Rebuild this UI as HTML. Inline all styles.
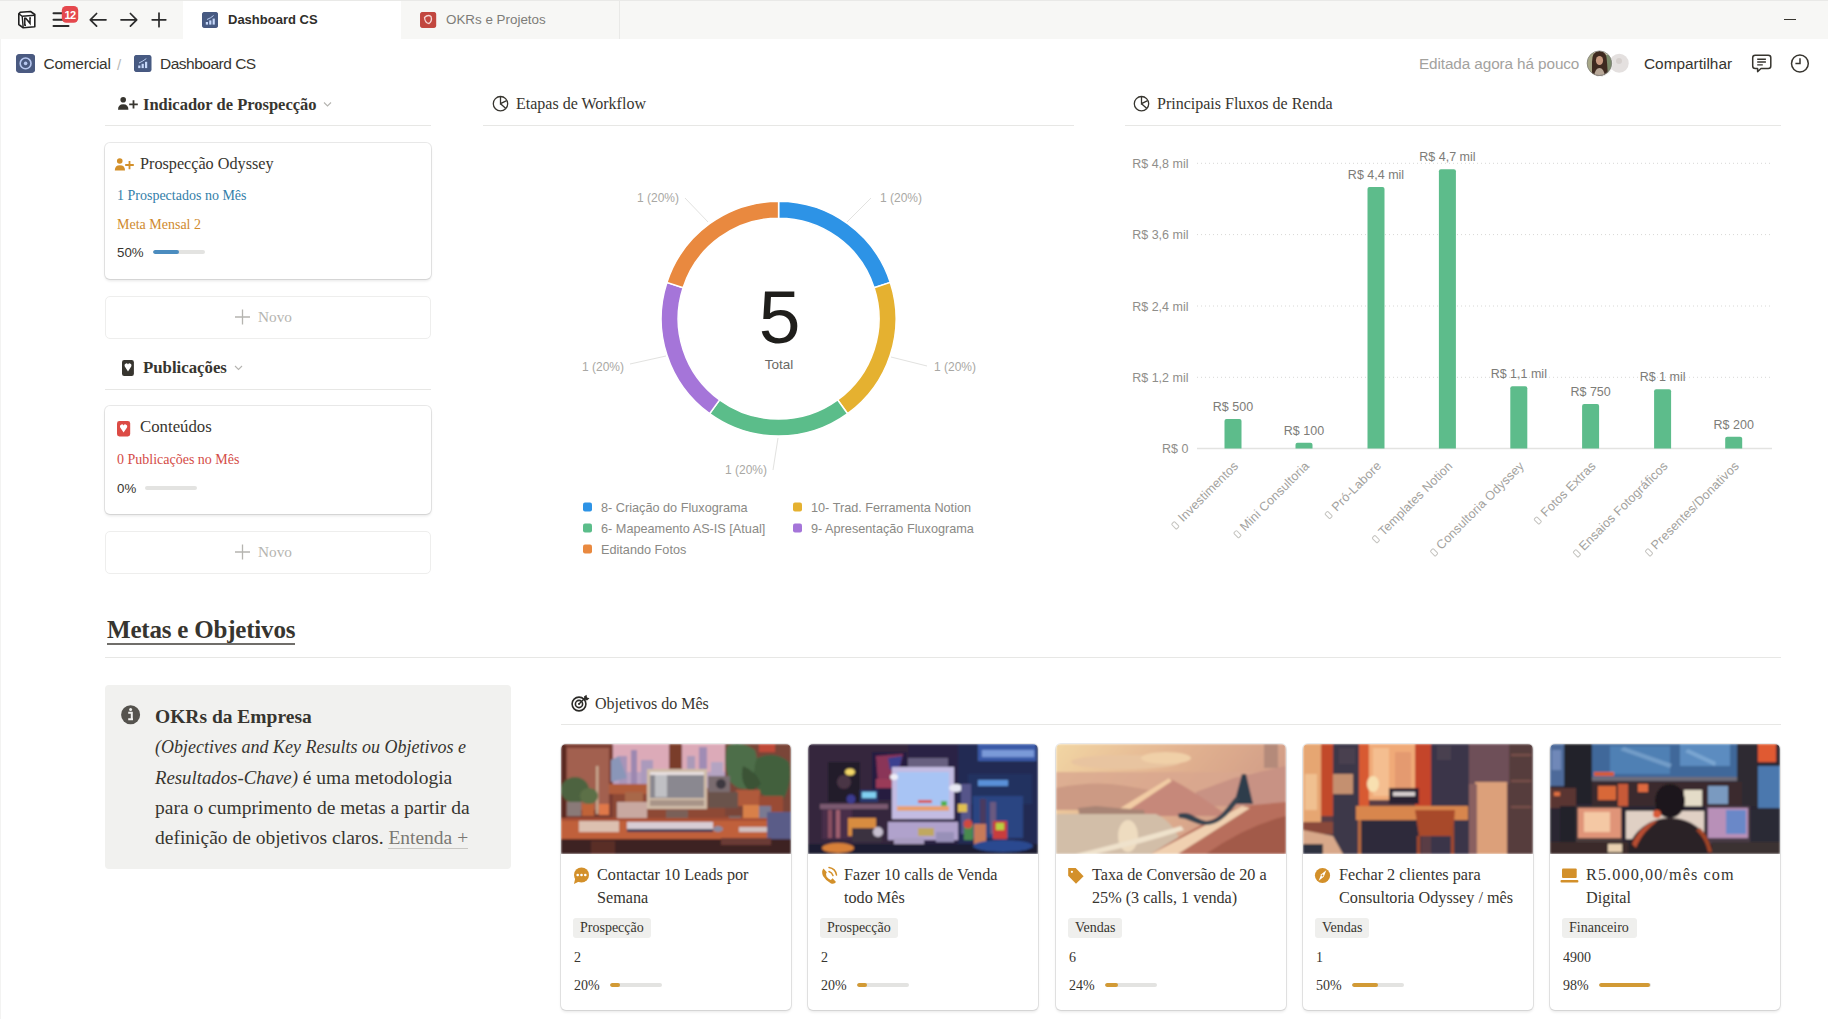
<!DOCTYPE html>
<html><head><meta charset="utf-8">
<style>
*{margin:0;padding:0;box-sizing:border-box}
html,body{width:1828px;height:1019px;overflow:hidden;background:#fff}
body{position:relative;font-family:"Liberation Sans",sans-serif;color:#37352f}
.a{position:absolute;white-space:nowrap;line-height:1}
.sf{font-family:"Liberation Serif",serif}
.ln{position:absolute;height:1px;background:#e7e7e5}
.card{position:absolute;border-radius:5px;background:#fff;box-shadow:0 0 0 1px rgba(15,15,15,.09),0 2px 3px rgba(15,15,15,.1)}
.novo{position:absolute;border-radius:5px;border:1px solid #eeeeed;background:#fff}
.bar{position:absolute;height:4px;border-radius:2px;background:#e3e3e1;overflow:hidden}
.bar i{position:absolute;left:0;top:0;bottom:0;border-radius:2px}
</style></head><body>

<!-- TAB BAR -->
<div class="a" style="left:0;top:0;width:1828px;height:39px;background:#f7f7f5;border-top:1px solid #e9e9e7"></div>
<div class="a" style="left:183px;top:1px;width:218px;height:38px;background:#fff"></div>
<div class="a" style="left:619px;top:1px;width:1px;height:38px;background:#e9e9e7"></div>
<div class="a" style="left:0;top:39px;width:1px;height:980px;background:#f3f3f2"></div>

<!-- TAB 1 -->
<div class="a" style="left:202px;top:12px;width:16px;height:16px;border-radius:3px;background:#45507a"></div>
<div class="a" style="left:228px;top:13px;font-size:13px;font-weight:700;color:#2f2e2a">Dashboard CS</div>
<!-- TAB 2 -->
<div class="a" style="left:420px;top:12px;width:16px;height:16px;border-radius:3px;background:#c9524f"></div>
<div class="a" style="left:446px;top:13px;font-size:13.4px;color:#7d7c78">OKRs e Projetos</div>

<!-- minimize -->
<div class="a" style="left:1784px;top:19px;width:12px;height:1px;background:#37352f"></div>

<!-- BREADCRUMB -->
<div class="a" style="left:16px;top:54px;width:19px;height:19px;border-radius:4px;background:#4e5a86"></div>
<div class="a" style="left:43.5px;top:56px;font-size:15.5px;letter-spacing:-0.3px;color:#37352f">Comercial</div>
<div class="a" style="left:117px;top:57px;font-size:15px;color:#b9b8b5">/</div>
<div class="a" style="left:134px;top:55px;width:17px;height:17px;border-radius:3px;background:#45507a"></div>
<div class="a" style="left:160px;top:56px;font-size:15.5px;letter-spacing:-0.5px;color:#37352f">Dashboard CS</div>

<div class="a" style="left:1419px;top:55.5px;font-size:15.3px;letter-spacing:-0.1px;color:#a3a29e">Editada agora há pouco</div>
<div class="a" style="left:1587px;top:51px;width:26px;height:26px;border-radius:50%;background:#6b5a4c;border:1px solid #fff"></div>
<div class="a" style="left:1644px;top:55.5px;font-size:15.4px;color:#37352f">Compartilhar</div>

<!-- LEFT COLUMN -->
<div class="a sf" style="left:143px;top:96.5px;font-size:16.5px;font-weight:700">Indicador de Prospecção</div>
<div class="ln" style="left:105px;top:125px;width:326px"></div>

<div class="card" style="left:105px;top:143px;width:326px;height:136px"></div>
<div class="a sf" style="left:140px;top:155.5px;font-size:16.2px">Prospecção Odyssey</div>
<div class="a sf" style="left:117px;top:189px;font-size:14px;color:#337ea9">1 Prospectados no Mês</div>
<div class="a sf" style="left:117px;top:217.5px;font-size:14px;color:#cf8a2e">Meta Mensal 2</div>
<div class="a" style="left:117px;top:245.5px;font-size:13.3px">50%</div>
<div class="bar" style="left:153px;top:250px;width:52px"><i style="width:26px;background:#4b8cbf"></i></div>

<div class="novo" style="left:105px;top:296px;width:326px;height:43px"></div>
<div class="a sf" style="left:258px;top:309px;font-size:15.3px;color:#b5b4b0">Novo</div>

<div class="a sf" style="left:143px;top:360px;font-size:16.8px;font-weight:700">Publicações</div>
<div class="ln" style="left:105px;top:389px;width:326px"></div>

<div class="card" style="left:105px;top:406px;width:326px;height:108px"></div>
<div class="a sf" style="left:140px;top:419px;font-size:16.8px">Conteúdos</div>
<div class="a sf" style="left:117px;top:453px;font-size:14px;color:#d44c47">0 Publicações no Mês</div>
<div class="a" style="left:117px;top:481.5px;font-size:13.3px">0%</div>
<div class="bar" style="left:145px;top:486px;width:52px"></div>

<div class="novo" style="left:105px;top:531px;width:326px;height:43px"></div>
<div class="a sf" style="left:258px;top:544px;font-size:15.3px;color:#b5b4b0">Novo</div>

<!-- MIDDLE -->
<div class="a sf" style="left:516px;top:96px;font-size:16px">Etapas de Workflow</div>
<div class="ln" style="left:483px;top:125px;width:591px"></div>

<!-- RIGHT -->
<div class="a sf" style="left:1157px;top:96px;font-size:16px">Principais Fluxos de Renda</div>
<div class="ln" style="left:1125px;top:125px;width:656px"></div>

<svg class="a" style="left:0;top:0" width="1828" height="1019" viewBox="0 0 1828 1019">
<style>text{font-family:"Liberation Sans",sans-serif}.pl{font-size:12px;fill:#a9a8a4}.lg{font-size:12.7px;fill:#8a8985}.yl{font-size:12.5px;fill:#8f8e8a}.vl{font-size:12.5px;fill:#7d7c78}.xl{font-size:12.5px;fill:#a3a29e;letter-spacing:0.15px}</style>
<path d="M778.6 201.3A117.4 117.4 0 0 1 890.3 282.4L874.1 287.7A100.4 100.4 0 0 0 778.6 218.3Z" fill="#2d93e6" stroke="#fff" stroke-width="1.5"/>
<path d="M890.3 282.4A117.4 117.4 0 0 1 847.6 413.7L837.6 399.9A100.4 100.4 0 0 0 874.1 287.7Z" fill="#e5b130" stroke="#fff" stroke-width="1.5"/>
<path d="M847.6 413.7A117.4 117.4 0 0 1 709.6 413.7L719.6 399.9A100.4 100.4 0 0 0 837.6 399.9Z" fill="#5bbd8a" stroke="#fff" stroke-width="1.5"/>
<path d="M709.6 413.7A117.4 117.4 0 0 1 666.9 282.4L683.1 287.7A100.4 100.4 0 0 0 719.6 399.9Z" fill="#a575d9" stroke="#fff" stroke-width="1.5"/>
<path d="M666.9 282.4A117.4 117.4 0 0 1 778.6 201.3L778.6 218.3A100.4 100.4 0 0 0 683.1 287.7Z" fill="#e9893f" stroke="#fff" stroke-width="1.5"/>
<g stroke="#e2e2e0" stroke-width="1" fill="none">
<path d="M847 222L871 198"/><path d="M891 357L927 366"/><path d="M778 438L773 470"/><path d="M666 356L630 364"/><path d="M708 222L685 198"/>
</g>
<text x="880" y="202" class="pl">1 (20%)</text>
<text x="934" y="371" class="pl">1 (20%)</text>
<text x="725" y="474" class="pl">1 (20%)</text>
<text x="582" y="371" class="pl">1 (20%)</text>
<text x="637" y="202" class="pl">1 (20%)</text>
<text x="779.5" y="342.7" text-anchor="middle" font-size="75" fill="#1f1e1b">5</text>
<text x="779" y="368.8" text-anchor="middle" font-size="13.5" fill="#6a6965">Total</text>
<rect x="583" y="502.5" width="9" height="9" rx="2" fill="#2d93e6"/><text x="601" y="511.5" class="lg">8- Criação do Fluxograma</text>
<rect x="793" y="502.5" width="9" height="9" rx="2" fill="#e5b130"/><text x="811" y="511.5" class="lg">10- Trad. Ferramenta Notion</text>
<rect x="583" y="523.5" width="9" height="9" rx="2" fill="#5bbd8a"/><text x="601" y="532.5" class="lg">6- Mapeamento AS-IS [Atual]</text>
<rect x="793" y="523.5" width="9" height="9" rx="2" fill="#a575d9"/><text x="811" y="532.5" class="lg">9- Apresentação Fluxograma</text>
<rect x="583" y="544.5" width="9" height="9" rx="2" fill="#e9893f"/><text x="601" y="553.5" class="lg">Editando Fotos</text>

<line x1="1197" y1="163.3" x2="1772" y2="163.3" stroke="#d8d8d6" stroke-width="1" stroke-dasharray="1 3"/>
<text x="1188.5" y="167.8" text-anchor="end" class="yl">R$ 4,8 mil</text>
<line x1="1197" y1="234.6" x2="1772" y2="234.6" stroke="#d8d8d6" stroke-width="1" stroke-dasharray="1 3"/>
<text x="1188.5" y="239.1" text-anchor="end" class="yl">R$ 3,6 mil</text>
<line x1="1197" y1="306" x2="1772" y2="306" stroke="#d8d8d6" stroke-width="1" stroke-dasharray="1 3"/>
<text x="1188.5" y="310.5" text-anchor="end" class="yl">R$ 2,4 mil</text>
<line x1="1197" y1="377.3" x2="1772" y2="377.3" stroke="#d8d8d6" stroke-width="1" stroke-dasharray="1 3"/>
<text x="1188.5" y="381.8" text-anchor="end" class="yl">R$ 1,2 mil</text>
<text x="1188.5" y="453.1" text-anchor="end" class="yl">R$ 0</text>
<line x1="1197" y1="448.6" x2="1772" y2="448.6" stroke="#e3e3e1" stroke-width="1.5"/>
<path d="M1224.5 448.6V420.9Q1224.5 418.9 1226.5 418.9H1239.5Q1241.5 418.9 1241.5 420.9V448.6Z" fill="#5dbc8b"/>
<text x="1233.0" y="410.9" text-anchor="middle" class="vl">R$ 500</text>
<g transform="rotate(-45 1239.0 466.6)"><text x="1239.0" y="466.6" text-anchor="end" class="xl">Investimentos</text><rect x="1150.4" y="459.6" width="4" height="7" rx="1" fill="none" stroke="#c4c3bf" stroke-width="1"/></g>
<path d="M1295.5 448.6V444.7Q1295.5 442.7 1297.5 442.7H1310.5Q1312.5 442.7 1312.5 444.7V448.6Z" fill="#5dbc8b"/>
<text x="1304.0" y="434.7" text-anchor="middle" class="vl">R$ 100</text>
<g transform="rotate(-45 1310.0 466.6)"><text x="1310.0" y="466.6" text-anchor="end" class="xl">Mini Consultoria</text><rect x="1208.9" y="459.6" width="4" height="7" rx="1" fill="none" stroke="#c4c3bf" stroke-width="1"/></g>
<path d="M1367.5 448.6V189.1Q1367.5 187.1 1369.5 187.1H1382.5Q1384.5 187.1 1384.5 189.1V448.6Z" fill="#5dbc8b"/>
<text x="1376.0" y="179.1" text-anchor="middle" class="vl">R$ 4,4 mil</text>
<g transform="rotate(-45 1382.0 466.6)"><text x="1382.0" y="466.6" text-anchor="end" class="xl">Pró-Labore</text><rect x="1308.0" y="459.6" width="4" height="7" rx="1" fill="none" stroke="#c4c3bf" stroke-width="1"/></g>
<path d="M1438.9 448.6V171.2Q1438.9 169.2 1440.9 169.2H1453.9Q1455.9 169.2 1455.9 171.2V448.6Z" fill="#5dbc8b"/>
<text x="1447.4" y="161.2" text-anchor="middle" class="vl">R$ 4,7 mil</text>
<g transform="rotate(-45 1453.4 466.6)"><text x="1453.4" y="466.6" text-anchor="end" class="xl">Templates Notion</text><rect x="1345.3" y="459.6" width="4" height="7" rx="1" fill="none" stroke="#c4c3bf" stroke-width="1"/></g>
<path d="M1510.3 448.6V388.2Q1510.3 386.2 1512.3 386.2H1525.3Q1527.3 386.2 1527.3 388.2V448.6Z" fill="#5dbc8b"/>
<text x="1518.8" y="378.2" text-anchor="middle" class="vl">R$ 1,1 mil</text>
<g transform="rotate(-45 1524.8 466.6)"><text x="1524.8" y="466.6" text-anchor="end" class="xl">Consultoria Odyssey</text><rect x="1398.0" y="459.6" width="4" height="7" rx="1" fill="none" stroke="#c4c3bf" stroke-width="1"/></g>
<path d="M1582.1 448.6V406.0Q1582.1 404.0 1584.1 404.0H1597.1Q1599.1 404.0 1599.1 406.0V448.6Z" fill="#5dbc8b"/>
<text x="1590.6" y="396.0" text-anchor="middle" class="vl">R$ 750</text>
<g transform="rotate(-45 1596.6 466.6)"><text x="1596.6" y="466.6" text-anchor="end" class="xl">Fotos Extras</text><rect x="1514.9" y="459.6" width="4" height="7" rx="1" fill="none" stroke="#c4c3bf" stroke-width="1"/></g>
<path d="M1654.1 448.6V391.2Q1654.1 389.2 1656.1 389.2H1669.1Q1671.1 389.2 1671.1 391.2V448.6Z" fill="#5dbc8b"/>
<text x="1662.6" y="381.2" text-anchor="middle" class="vl">R$ 1 mil</text>
<g transform="rotate(-45 1668.6 466.6)"><text x="1668.6" y="466.6" text-anchor="end" class="xl">Ensaios Fotográficos</text><rect x="1540.4" y="459.6" width="4" height="7" rx="1" fill="none" stroke="#c4c3bf" stroke-width="1"/></g>
<path d="M1725.2 448.6V438.7Q1725.2 436.7 1727.2 436.7H1740.2Q1742.2 436.7 1742.2 438.7V448.6Z" fill="#5dbc8b"/>
<text x="1733.7" y="428.7" text-anchor="middle" class="vl">R$ 200</text>
<g transform="rotate(-45 1739.7 466.6)"><text x="1739.7" y="466.6" text-anchor="end" class="xl">Presentes/Donativos</text><rect x="1612.9" y="459.6" width="4" height="7" rx="1" fill="none" stroke="#c4c3bf" stroke-width="1"/></g>
</svg>

<svg class="a" style="left:0;top:0;z-index:5" width="1828" height="1019" viewBox="0 0 1828 1019">
<!-- notion logo -->
<g transform="translate(18,11)">
<path d="M2.5 1.2 L12.5 0.5 L16.8 3.5 L16.8 15.8 L5.2 16.8 L0.8 13.5 L0.8 2.8Z" fill="#fff" stroke="#1f1f1f" stroke-width="1.6" stroke-linejoin="round"/>
<path d="M0.8 2.8 L4.2 5.2 L16.8 4.2 M4.2 5.2 L5.2 16.8" fill="none" stroke="#1f1f1f" stroke-width="1.4"/>
<path d="M6.8 14 V7.3 L7.8 7.2 L12 12.3 V7 M6.2 14.2 H8 M11.2 6.9 H13 M6 7.4 H8" fill="none" stroke="#1f1f1f" stroke-width="1.5"/>
</g>
<!-- hamburger -->
<g stroke="#2b2b2b" stroke-width="2" stroke-linecap="round"><path d="M53.5 13.2H64M53.5 19.7H64M53.5 25.9H68.5"/></g>
<rect x="61.8" y="6" width="16.4" height="16.8" rx="4.5" fill="#e5484d"/>
<text x="70" y="18.6" text-anchor="middle" font-family="Liberation Sans" font-size="11" font-weight="700" fill="#fff" letter-spacing="-0.5">12</text>
<!-- arrows -->
<g fill="none" stroke="#2b2b2b" stroke-width="1.7" stroke-linecap="round" stroke-linejoin="round">
<path d="M106 19.8H90.5M96.6 13.5L90.3 19.8L96.6 26.2"/>
<path d="M121 19.8H136.5M130.4 13.5L136.7 19.8L130.4 26.2"/>
<path d="M159 13V26.7M152.2 19.8H165.8"/>
</g>
<!-- tab icons -->
<rect x="202.2" y="12.1" width="15.8" height="15.6" rx="2.5" fill="#475a82"/>
<g fill="#c6d8fa"><rect x="205.8" y="22" width="2.2" height="2.6"/><rect x="209.2" y="20.4" width="2.2" height="4.2"/><rect x="212.6" y="18.6" width="2.2" height="6"/></g>
<path d="M207 19.5L210.5 17.8L213.6 15.5" stroke="#c6d8fa" stroke-width="0.9" fill="none"/>
<rect x="420.3" y="11.9" width="15.9" height="15.9" rx="2.5" fill="#c2473f"/>
<path d="M424.5 17.5 Q428 14 431 16.5 Q432.5 21 429 23.5 Q425 23 424.5 17.5Z" fill="none" stroke="#f6d6d4" stroke-width="1.3"/>
<!-- breadcrumb icons -->
<rect x="16.2" y="54.2" width="18.8" height="18.4" rx="3" fill="#4a5a80"/>
<circle cx="25.6" cy="63.4" r="5.4" fill="none" stroke="#b8c8f0" stroke-width="1.6"/>
<circle cx="25.6" cy="63.4" r="1.8" fill="#b8c8f0"/>
<rect x="134.3" y="55" width="17.2" height="16.8" rx="2.6" fill="#475a82"/>
<g fill="#c6d8fa"><rect x="138.2" y="65.5" width="2.2" height="2.6"/><rect x="141.6" y="63.8" width="2.2" height="4.3"/><rect x="145" y="61.8" width="2.2" height="6.3"/></g>
<path d="M139 63L142.8 61L146.3 58.6" stroke="#c6d8fa" stroke-width="0.9" fill="none"/>
<!-- avatars -->
<circle cx="1619.2" cy="63.2" r="9.5" fill="#e4e0df"/>
<circle cx="1619" cy="61" r="3" fill="#d6d0ce"/>
<circle cx="1599.4" cy="63.2" r="13" fill="#fff"/>
<clipPath id="avc"><circle cx="1599.4" cy="63.2" r="12.3"/></clipPath>
<g clip-path="url(#avc)">
<rect x="1587" y="50" width="26" height="27" fill="#c9c4a8"/>
<rect x="1587" y="50" width="7" height="27" fill="#a8a888"/>
<rect x="1606" y="55" width="8" height="22" fill="#7a8a6a"/>
<path d="M1592 77 L1592 62 Q1592 51 1599.5 51 Q1607 51 1607 62 L1608 77Z" fill="#3e2a20"/>
<ellipse cx="1599.5" cy="60.5" rx="3.6" ry="4.6" fill="#c89a80"/>
<path d="M1594 77 Q1595 68 1599.5 68 Q1604 68 1605 77Z" fill="#b8a898"/>
</g>
<circle cx="1599.4" cy="63.2" r="12.3" fill="none" stroke="#7a7a78" stroke-width="0.7"/>
<!-- comment -->
<path d="M1755.2 55.3H1768.3Q1770.8 55.3 1770.8 57.8V66Q1770.8 68.5 1768.3 68.5H1761L1757.6 71.6V68.5H1755.2Q1752.7 68.5 1752.7 66V57.8Q1752.7 55.3 1755.2 55.3Z" fill="none" stroke="#37352f" stroke-width="1.5" stroke-linejoin="round"/>
<path d="M1757.2 59.2H1765.9M1757.2 62H1765.9M1757.2 64.9H1762.8" stroke="#37352f" stroke-width="1.4"/>
<!-- clock -->
<circle cx="1799.9" cy="63.5" r="8.4" fill="none" stroke="#37352f" stroke-width="1.5"/>
<path d="M1800 58.3V63.6H1795.4" fill="none" stroke="#37352f" stroke-width="1.5"/>
<!-- section icons -->
<g fill="#37352f">
<circle cx="123.2" cy="99.8" r="2.8"/>
<path d="M118 109.7 Q118 104.2 123.2 104.2 Q128.4 104.2 128.4 109.7Z"/>
</g>
<path d="M133.5 100.2V108.4M129.2 104.3H137.8" stroke="#37352f" stroke-width="1.8"/>
<path d="M324 102.5L327.5 106L331 102.5" fill="none" stroke="#b5b4b0" stroke-width="1.1"/>
<rect x="122" y="360" width="11.9" height="15.9" rx="2.2" fill="#37352f"/>
<path d="M128 371.5 L124.8 366.5 Q124 364 126 363.4 Q127.5 363.2 128 364.5 Q128.5 363.2 130 363.4 Q132 364 131.2 366.5Z" fill="#fff"/>
<path d="M235 366L238.5 369.5L242 366" fill="none" stroke="#b5b4b0" stroke-width="1.1"/>
<g fill="#d3902a">
<circle cx="119.75" cy="161" r="2.8"/>
<path d="M114.8 170.5 Q114.8 165.2 119.9 165.2 Q125 165.2 125 170.5Z"/>
</g>
<path d="M129.5 160.9V169.2M125.2 165H133.8" stroke="#d3902a" stroke-width="1.8"/>
<rect x="117" y="421" width="13.2" height="15.4" rx="2.4" fill="#dc4b45"/>
<path d="M123.6 432.5 L120.2 427.6 Q119.4 425 121.6 424.4 Q123 424.2 123.6 425.5 Q124.2 424.2 125.6 424.4 Q127.8 425 127 427.6Z" fill="#fff"/>
<!-- pie icons -->
<g fill="none" stroke="#37352f" stroke-width="1.3">
<circle cx="500.5" cy="103.7" r="7.2"/><path d="M500.5 96.5V103.7L506.6 100.6M500.5 103.7L505.6 108.3"/>
<circle cx="1141.5" cy="103.7" r="7.2"/><path d="M1141.5 96.5V103.7L1147.6 100.6M1141.5 103.7L1146.6 108.3"/>
</g>
<!-- target icon -->
<g fill="none" stroke="#2b2a27" stroke-width="1.6">
<circle cx="579" cy="704" r="6.9"/><circle cx="579" cy="704" r="3.6"/>
</g>
<circle cx="579" cy="704" r="1" fill="#2b2a27"/>
<path d="M579 704L585 698" stroke="#2b2a27" stroke-width="1.5"/>
<path d="M584 696.5L586.5 694.8L587 697.5L589.5 698.2L587 700.5L584.5 699.5Z" fill="#2b2a27"/>
<!-- info icon -->
<circle cx="130.6" cy="714.8" r="9.5" fill="#55534e"/>
<circle cx="130.6" cy="709.6" r="1.5" fill="#f1f1ef"/>
<path d="M128.2 712.8H131.8V719.2H133M128.2 719.2H133" fill="none" stroke="#f1f1ef" stroke-width="2"/>
<!-- novo plus -->
<path d="M242.5 309.5V324.5M235 317H250" stroke="#b5b4b0" stroke-width="1.3"/>
<path d="M242.5 544.5V559.5M235 552H250" stroke="#b5b4b0" stroke-width="1.3"/>
<!-- card icons -->
<g fill="#d3902a">
<circle cx="581.5" cy="874.9" r="7.5"/><path d="M574 884 L575.5 877 L580 881Z"/>
<path d="M823.5 868.5 Q821 871 823 876 Q826 881 831 883.5 Q834.5 884.5 836 882 L832.6 878.3 L830.8 880 Q828 878.5 826.5 876.5 Q825 874.5 826.8 872.3Z"/>
<path d="M1068.2 868H1075.7L1083.6 876.3L1076 883.7L1068.2 875.7Z"/>
<circle cx="1322.5" cy="875.5" r="7.6"/>
<rect x="1562" y="868.6" width="14.7" height="9.3" rx="1"/>
<rect x="1560.5" y="879.9" width="17.9" height="2.6" rx="1"/>
</g>
<g fill="#fff"><circle cx="577.7" cy="875" r="1.3"/><circle cx="581.5" cy="875" r="1.3"/><circle cx="585.3" cy="875" r="1.3"/>
<circle cx="1071.9" cy="871.8" r="1.1"/>
<path d="M1326.3 870.3 L1323.8 876.8 L1318.7 880.7 L1321.2 874.2Z"/>
</g>
<circle cx="1322.5" cy="875.5" r="0.9" fill="#d3902a"/>
<g fill="none" stroke="#d3902a" stroke-width="1.5" stroke-linecap="round">
<path d="M829 871.5 Q832 872.5 833 875.5"/><path d="M829 867.5 Q835.5 868.5 836.5 875"/>
</g>
</svg>

<!-- METAS -->
<div class="a sf" style="left:107px;top:616.5px;font-size:25px;font-weight:700;letter-spacing:-0.2px">Metas e Objetivos</div>
<div class="ln" style="left:105px;top:657px;width:1676px"></div>

<div class="a" style="left:105px;top:685px;width:406px;height:184px;background:#f1f1ef;border-radius:4px"></div>

<div class="a sf" style="left:595px;top:696px;font-size:16px">Objetivos do Mês</div>
<div class="ln" style="left:561px;top:724px;width:1220px"></div>

<div class="a" style="left:107px;top:643px;width:188px;height:2px;background:#706e6a"></div>
<div class="a sf" style="left:155px;top:702px;font-size:19.5px;line-height:30.3px;white-space:normal;width:340px;color:#37352f">
<b style="font-size:19.5px">OKRs da Empresa</b><br><i style="font-size:18px">(Objectives and Key Results ou Objetivos e</i><br><i style="font-size:18.8px">Resultados-Chave)</i> é uma metodologia<br>para o cumprimento de metas a partir da<br>definição de objetivos claros. <span style="color:#7a7873;border-bottom:1px solid #c9c8c4">Entenda +</span></div>
<div class="card" style="left:561px;top:744px;width:230px;height:266px;overflow:hidden"><svg style="position:absolute;left:0;top:0" width="230" height="110" viewBox="0 0 230 110"><filter id="bl0" x="-5%" y="-5%" width="110%" height="110%"><feGaussianBlur stdDeviation="1.2"/></filter><g filter="url(#bl0)"><rect width="230" height="110" fill="#8e4a36"/>
<rect x="0" y="0" width="52" height="78" fill="#7a3e30"/>
<rect x="6" y="4" width="42" height="62" fill="#a26050"/>
<rect x="0" y="0" width="5" height="110" fill="#5a2a22"/>
<rect x="52" y="0" width="112" height="44" fill="#dcaab8"/>
<rect x="52" y="28" width="112" height="16" fill="#b8a0c0"/>
<rect x="58" y="12" width="8" height="32" fill="#a894b8"/>
<rect x="70" y="6" width="6" height="38" fill="#9c88b0"/>
<rect x="80" y="16" width="12" height="28" fill="#ab9abc"/>
<rect x="126" y="12" width="8" height="32" fill="#ab9ab8"/>
<rect x="138" y="3" width="8" height="41" fill="#a08cb4"/>
<rect x="150" y="18" width="12" height="26" fill="#b4a4c2"/>
<rect x="108" y="0" width="13" height="26" fill="#7a3c2a"/>
<rect x="48" y="40" width="40" height="10" fill="#b05c3a"/>
<rect x="164" y="0" width="66" height="72" fill="#7a4438"/>
<rect x="198" y="0" width="16" height="8" fill="#c04838"/>
<path d="M166 2 Q180 -4 194 6 Q200 22 190 44 Q176 48 168 36 Q162 18 166 2Z" fill="#4e6e4a"/>
<path d="M196 14 Q214 6 228 18 Q232 40 222 56 Q204 58 196 44 Q190 28 196 14Z" fill="#43603e"/>
<path d="M182 22 Q196 28 200 40 L190 48 Q178 40 182 22Z" fill="#3a5236"/>
<rect x="175" y="46" width="24" height="16" fill="#b05a3a"/>
<rect x="198" y="52" width="24" height="18" fill="#9a4c34"/>
<path d="M50 16 L58 12 L66 34 L50 38Z" fill="#8a96b8"/>
<rect x="35" y="22" width="2.5" height="48" fill="#c8a890"/>
<ellipse cx="14" cy="46" rx="14" ry="13" fill="#4e6440"/>
<ellipse cx="28" cy="52" rx="9" ry="8" fill="#5c7046"/>
<rect x="6" y="58" width="14" height="14" fill="#8a7a78"/>
<rect x="21" y="60" width="12" height="12" fill="#c06438"/>
<rect x="38" y="60" width="10" height="11" fill="#e07848"/>
<rect x="56" y="58" width="30" height="16" fill="#c8a8a0"/>
<rect x="64" y="48" width="18" height="10" fill="#a86848"/>
<rect x="86" y="25" width="60" height="40" fill="#d0bca8"/>
<rect x="89" y="28" width="54" height="26" fill="#8a8890"/>
<rect x="94" y="31" width="12" height="22" fill="#c0c0c4"/>
<rect x="89" y="28" width="54" height="3" fill="#e8e0e0"/>
<rect x="89" y="56" width="54" height="6" fill="#a89488"/>
<rect x="105" y="66" width="22" height="8" fill="#7a6058"/>
<rect x="147" y="32" width="22" height="16" fill="#7a6c70"/>
<circle cx="160" cy="40" r="5" fill="#3e3840"/>
<rect x="147" y="48" width="30" height="16" fill="#6a524c"/>
<rect x="182" y="61" width="16" height="14" fill="#d8804a"/>
<rect x="198" y="62" width="12" height="20" fill="#7a7a92"/>
<rect x="168" y="72" width="12" height="12" fill="#7a6a68"/>
<rect x="0" y="76" width="230" height="19" fill="#c0603a"/>
<rect x="0" y="74" width="230" height="3" fill="#a85034"/>
<rect x="66" y="78" width="86" height="9" fill="#d8ccd4"/>
<rect x="66" y="85" width="86" height="3" fill="#3a3a54"/>
<rect x="18" y="77" width="40" height="11" fill="#dcc0b0"/>
<ellipse cx="157" cy="85" rx="5" ry="3" fill="#8a8aa0"/>
<rect x="178" y="83" width="36" height="5" fill="#d0c0c0"/>
<rect x="206" y="68" width="24" height="34" fill="#5a5c88"/>
<rect x="0" y="95" width="230" height="15" fill="#3e2220"/>
<rect x="30" y="97" width="24" height="13" fill="#5a2e28"/>
<rect x="160" y="94" width="50" height="7" fill="#6a3a34"/>
</g></svg></div>
<div class="a sf" style="left:597px;top:864px;font-size:16.2px;line-height:22.5px;color:#37352f">Contactar 10 Leads por<br>Semana</div>
<div class="a" style="left:573px;top:918px;width:78px;height:20px;border-radius:3px;background:#efefed"></div>
<div class="a sf" style="left:580px;top:921px;font-size:14px;color:#37352f">Prospecção</div>
<div class="a sf" style="left:574px;top:951px;font-size:14px;color:#37352f">2</div>
<div class="a sf" style="left:574px;top:979px;font-size:14px;color:#37352f">20%</div>
<div class="bar" style="left:610px;top:983px;width:52px"><i style="width:10.4px;background:#d29a35"></i></div>
<div class="card" style="left:808px;top:744px;width:230px;height:266px;overflow:hidden"><svg style="position:absolute;left:0;top:0" width="230" height="110" viewBox="0 0 230 110"><filter id="bl1" x="-5%" y="-5%" width="110%" height="110%"><feGaussianBlur stdDeviation="1.2"/></filter><g filter="url(#bl1)"><rect width="230" height="110" fill="#2c2444"/>
<rect x="0" y="0" width="100" height="110" fill="#34283e"/>
<rect x="150" y="0" width="80" height="110" fill="#222a52"/>
<rect x="20" y="18" width="32" height="40" fill="#241c2c"/>
<ellipse cx="42" cy="28" rx="5" ry="3.5" fill="#f4d868"/>
<ellipse cx="36" cy="38" rx="7" ry="7" fill="#4a3444"/>
<rect x="64" y="8" width="35" height="48" fill="#281c40"/>
<path d="M68 12 L95 10 L90 30 L70 40Z" fill="#8a3458"/><path d="M80 14 L94 12 L92 22 L82 26Z" fill="#3a4090"/>
<rect x="68" y="35" width="16" height="9" fill="#9a3a58"/>
<rect x="100" y="14" width="40" height="10" fill="#686080"/>
<rect x="84" y="23" width="62" height="52" fill="#c4bce2"/>
<rect x="89" y="28" width="52" height="40" fill="#a8c4f4"/>
<rect x="89" y="62" width="52" height="5" fill="#e8a070"/>
<rect x="110" y="56" width="14" height="3" fill="#d85040"/>
<rect x="133" y="57" width="6" height="5" fill="#50b050"/>
<ellipse cx="86" cy="33" rx="4" ry="3" fill="#f0f0f8"/>
<ellipse cx="148" cy="44" rx="7" ry="4" fill="#e8e8f4"/>
<rect x="170" y="0" width="58" height="17" fill="#3a5aa8"/>
<rect x="174" y="6" width="52" height="7" fill="#7a9ad8"/>
<rect x="160" y="30" width="64" height="30" fill="#243060"/>
<rect x="170" y="36" width="30" height="6" fill="#5a90d8"/>
<rect x="165" y="52" width="50" height="42" fill="#2a4482"/>
<rect x="172" y="55" width="6" height="36" fill="#4a3a60"/>
<rect x="182" y="58" width="6" height="32" fill="#6a5a80"/>
<rect x="153" y="40" width="10" height="50" fill="#56548a"/>
<rect x="12" y="60" width="68" height="5" fill="#7a5a70"/>
<rect x="14" y="65" width="30" height="30" fill="#4a2e48"/>
<rect x="20" y="66" width="4" height="28" fill="#8a5060"/>
<rect x="28" y="66" width="4" height="28" fill="#a06070"/>
<rect x="40" y="74" width="28" height="18" fill="#d88c40"/>
<rect x="52" y="46" width="18" height="12" fill="#2a3a70"/>
<rect x="54" y="48" width="14" height="6" fill="#80d0f0"/>
<circle cx="43" cy="55" r="4.5" fill="#3a3a90"/>
<rect x="80" y="78" width="70" height="18" fill="#b0a2cc"/>
<rect x="110" y="84" width="16" height="8" fill="#c0a860"/>
<rect x="86" y="94" width="30" height="7" fill="#a89cc0"/>
<rect x="128" y="88" width="18" height="10" fill="#9890b8"/>
<rect x="44" y="84" width="30" height="14" fill="#3a3040"/>
<circle cx="70" cy="88" r="5" fill="#c8c0d0"/>
<rect x="156" y="80" width="9" height="16" fill="#4a8a50"/>
<circle cx="160" cy="80" r="4.5" fill="#d04a40"/>
<rect x="166" y="80" width="12" height="20" fill="#c87a58"/>
<rect x="185" y="77" width="14" height="18" fill="#c83c3c"/>
<rect x="188" y="79" width="8" height="7" fill="#b8d040"/>
<rect x="150" y="60" width="9" height="8" fill="#e0c050"/>
<rect x="0" y="100" width="230" height="10" fill="#1e1a30"/>
<ellipse cx="30" cy="104" rx="16" ry="5" fill="#d88038"/>
<ellipse cx="195" cy="102" rx="30" ry="6" fill="#2a4a90"/>
</g></svg></div>
<div class="a sf" style="left:844px;top:864px;font-size:16.2px;line-height:22.5px;color:#37352f">Fazer 10 calls de Venda<br>todo Mês</div>
<div class="a" style="left:820px;top:918px;width:78px;height:20px;border-radius:3px;background:#efefed"></div>
<div class="a sf" style="left:827px;top:921px;font-size:14px;color:#37352f">Prospecção</div>
<div class="a sf" style="left:821px;top:951px;font-size:14px;color:#37352f">2</div>
<div class="a sf" style="left:821px;top:979px;font-size:14px;color:#37352f">20%</div>
<div class="bar" style="left:857px;top:983px;width:52px"><i style="width:10.4px;background:#d29a35"></i></div>
<div class="card" style="left:1056px;top:744px;width:230px;height:266px;overflow:hidden"><svg style="position:absolute;left:0;top:0" width="230" height="110" viewBox="0 0 230 110"><filter id="bl2" x="-5%" y="-5%" width="110%" height="110%"><feGaussianBlur stdDeviation="1.2"/></filter><g filter="url(#bl2)"><defs><linearGradient id="sky2" x1="0" y1="0" x2="1" y2="0.4"><stop offset="0" stop-color="#f2d6a4"/><stop offset="0.5" stop-color="#e2b290"/><stop offset="1" stop-color="#cf9a86"/></linearGradient></defs>
<rect width="230" height="110" fill="url(#sky2)"/>
<ellipse cx="70" cy="18" rx="55" ry="7" fill="#e8c4a0"/>
<ellipse cx="110" cy="14" rx="25" ry="6" fill="#f0d0a8"/>
<rect x="0" y="28" width="230" height="30" fill="#d8a68e" opacity="0.8"/>
<path d="M0 44 Q40 36 70 42 Q95 46 110 50 L110 66 L0 66Z" fill="#cc9a84"/>
<path d="M140 48 L178 34 L230 22 L230 62 L140 62Z" fill="#c89284"/>
<rect x="208" y="0" width="14" height="24" fill="#b48a7a"/>
<path d="M58 68 L113 34 Q140 48 172 72 L58 72Z" fill="#c6887a"/>
<path d="M113 34 L58 68 L70 68 L116 37Z" fill="#f2cca4"/>
<path d="M22 64 L40 62 L60 64 L88 66 L90 76 L24 76Z" fill="#a88474"/>
<path d="M0 70 L100 70 Q122 80 128 110 L0 110Z" fill="#d2bea8"/>
<ellipse cx="72" cy="92" rx="10" ry="16" fill="#eedcc0"/>
<path d="M20 110 Q80 95 125 82 L128 86 Q85 100 40 110Z" fill="#efe2cc"/>
<path d="M95 110 Q150 76 186 62 L230 58 L230 110Z" fill="#b86e5c"/>
<path d="M95 110 L186 62 L194 64 L122 110Z" fill="#f0d0b0"/>
<path d="M150 110 Q190 82 230 72 L230 110Z" fill="#a25a4a"/>
<path d="M186 30 L190 30 L197 60 L178 60Z" fill="#2e3c4c"/>
<path d="M122 70 C135 66 140 76 150 77 C165 77 172 60 181 52 L184 55 C176 66 165 81 150 81 C140 81 132 74 123 74Z" fill="#34424f"/>
</g></svg></div>
<div class="a sf" style="left:1092px;top:864px;font-size:16.2px;line-height:22.5px;color:#37352f">Taxa de Conversão de 20 a<br>25% (3 calls, 1 venda)</div>
<div class="a" style="left:1068px;top:918px;width:54px;height:20px;border-radius:3px;background:#efefed"></div>
<div class="a sf" style="left:1075px;top:921px;font-size:14px;color:#37352f">Vendas</div>
<div class="a sf" style="left:1069px;top:951px;font-size:14px;color:#37352f">6</div>
<div class="a sf" style="left:1069px;top:979px;font-size:14px;color:#37352f">24%</div>
<div class="bar" style="left:1105px;top:983px;width:52px"><i style="width:12.5px;background:#d29a35"></i></div>
<div class="card" style="left:1303px;top:744px;width:230px;height:266px;overflow:hidden"><svg style="position:absolute;left:0;top:0" width="230" height="110" viewBox="0 0 230 110"><filter id="bl3" x="-5%" y="-5%" width="110%" height="110%"><feGaussianBlur stdDeviation="1.2"/></filter><g filter="url(#bl3)"><rect width="230" height="110" fill="#5a3e44"/>
<rect x="0" y="0" width="18" height="80" fill="#e6a672"/>
<rect x="2" y="30" width="12" height="36" fill="#f0c090"/>
<rect x="18" y="0" width="12" height="72" fill="#c24a2c"/>
<rect x="30" y="0" width="26" height="110" fill="#3e3848"/>
<rect x="36" y="4" width="16" height="16" fill="#4a4050"/>
<rect x="30" y="30" width="20" height="20" fill="#c49070"/>
<rect x="56" y="0" width="10" height="70" fill="#d85a30"/>
<rect x="66" y="0" width="46" height="56" fill="#f0aa78"/>
<rect x="70" y="4" width="16" height="48" fill="#f4be90"/>
<rect x="92" y="8" width="16" height="42" fill="#e49a70"/>
<rect x="112" y="0" width="16" height="64" fill="#c4442c"/>
<rect x="128" y="0" width="38" height="110" fill="#3a3448"/>
<rect x="134" y="2" width="14" height="14" fill="#4a4050"/>
<rect x="166" y="0" width="40" height="40" fill="#6e5058"/>
<rect x="172" y="38" width="32" height="72" fill="#dca07a"/>
<rect x="166" y="40" width="8" height="70" fill="#8a6060"/>
<rect x="206" y="0" width="24" height="110" fill="#563c3c"/>
<rect x="208" y="10" width="20" height="2" fill="#7a5048"/>
<rect x="208" y="36" width="20" height="2" fill="#7a5048"/>
<rect x="208" y="62" width="20" height="2" fill="#7a5048"/>
<ellipse cx="70" cy="40" rx="6" ry="8" fill="#f8e0b0"/>
<rect x="86" y="44" width="30" height="16" fill="#2a2230"/>
<rect x="90" y="48" width="22" height="4" fill="#d8d0d0"/>
<rect x="53" y="62" width="112" height="14" fill="#d8864e"/>
<rect x="55" y="76" width="4" height="34" fill="#b86a40"/>
<rect x="58" y="76" width="60" height="34" fill="#2e2a3a"/>
<path d="M112 66 L152 66 L150 92 L116 92Z" fill="#a84a2c"/>
<rect x="114" y="92" width="3" height="18" fill="#a04a2c"/>
<rect x="148" y="82" width="3" height="28" fill="#a04a2c"/>
<rect x="0" y="78" width="30" height="12" fill="#8a4a3a"/>
<path d="M0 86 L30 92 L40 110 L0 110Z" fill="#d8a88a"/>
<rect x="0" y="100" width="20" height="10" fill="#2e3040"/>
</g></svg></div>
<div class="a sf" style="left:1339px;top:864px;font-size:16.2px;line-height:22.5px;color:#37352f">Fechar 2 clientes para<br>Consultoria Odyssey / mês</div>
<div class="a" style="left:1315px;top:918px;width:54px;height:20px;border-radius:3px;background:#efefed"></div>
<div class="a sf" style="left:1322px;top:921px;font-size:14px;color:#37352f">Vendas</div>
<div class="a sf" style="left:1316px;top:951px;font-size:14px;color:#37352f">1</div>
<div class="a sf" style="left:1316px;top:979px;font-size:14px;color:#37352f">50%</div>
<div class="bar" style="left:1352px;top:983px;width:52px"><i style="width:26.0px;background:#d29a35"></i></div>
<div class="card" style="left:1550px;top:744px;width:230px;height:266px;overflow:hidden"><svg style="position:absolute;left:0;top:0" width="230" height="110" viewBox="0 0 230 110"><filter id="bl4" x="-5%" y="-5%" width="110%" height="110%"><feGaussianBlur stdDeviation="1.2"/></filter><g filter="url(#bl4)"><rect width="230" height="110" fill="#2a2630"/>
<rect x="0" y="0" width="14" height="42" fill="#4e6a9a"/>
<rect x="2" y="6" width="9" height="20" fill="#7088b8"/>
<rect x="14" y="0" width="28" height="60" fill="#24202a"/>
<rect x="42" y="0" width="145" height="36" fill="#40689a"/>
<rect x="60" y="2" width="60" height="28" fill="#5080b4"/>
<rect x="130" y="0" width="50" height="22" fill="#5c8cc0"/>
<path d="M70 6 L120 24 L122 20 L74 3Z" fill="#80a8d0" opacity="0.7"/>
<path d="M135 8 L165 22 L166 18 L138 5Z" fill="#88b0d8" opacity="0.7"/>
<rect x="44" y="28" width="20" height="4" fill="#d85a30"/>
<rect x="42" y="33" width="145" height="4" fill="#6e6c78"/>
<rect x="187" y="0" width="20" height="62" fill="#2e2a30"/>
<rect x="208" y="0" width="18" height="18" fill="#e05a30"/>
<rect x="208" y="22" width="22" height="42" fill="#4c78ae"/>
<rect x="42" y="38" width="150" height="24" fill="#3a2c2e"/>
<rect x="48" y="42" width="18" height="14" fill="#d86838"/>
<rect x="68" y="40" width="10" height="22" fill="#c85a38"/>
<rect x="88" y="40" width="10" height="8" fill="#e06a40"/>
<rect x="134" y="46" width="18" height="16" fill="#e4dcc8"/>
<rect x="158" y="42" width="20" height="18" fill="#7a9ac0"/>
<rect x="0" y="44" width="26" height="20" fill="#5a3430"/>
<rect x="4" y="48" width="6" height="4" fill="#e07040"/>
<rect x="10" y="62" width="16" height="36" fill="#22202a"/>
<rect x="26" y="62" width="46" height="38" fill="#4a3a3a"/>
<rect x="28" y="64" width="43" height="30" fill="#e09478"/>
<rect x="34" y="68" width="26" height="20" fill="#f4c8a4"/>
<rect x="76" y="67" width="78" height="28" fill="#e0d0c4"/>
<rect x="156" y="62" width="44" height="38" fill="#4a3a46"/>
<rect x="158" y="64" width="40" height="30" fill="#b890b8"/>
<rect x="176" y="66" width="20" height="24" fill="#6a88c8"/>
<rect x="200" y="66" width="30" height="44" fill="#2a2a34"/>
<ellipse cx="120" cy="57" rx="15" ry="17" fill="#1c181c"/>
<path d="M76 110 C82 86 100 74 120 74 C140 74 158 86 164 110Z" fill="#2a2226"/>
<path d="M82 100 C88 86 98 78 108 76 L104 80 C96 86 90 94 86 104Z" fill="#b84e30"/>
<path d="M150 84 C156 90 160 98 162 108 L158 108 C156 98 152 92 146 86Z" fill="#a04428"/>
<circle cx="107" cy="70" r="4" fill="#d85a38"/>
<rect x="0" y="98" width="78" height="12" fill="#3a2c2a"/>
<rect x="58" y="100" width="14" height="8" fill="#e8d0b0"/>
<rect x="162" y="98" width="68" height="12" fill="#3a3030"/>
</g></svg></div>
<div class="a sf" style="left:1586px;top:864px;font-size:16.2px;line-height:22.5px;color:#37352f"><span style="letter-spacing:1.1px">R5.000,00/mês com</span><br>Digital</div>
<div class="a" style="left:1562px;top:918px;width:75px;height:20px;border-radius:3px;background:#efefed"></div>
<div class="a sf" style="left:1569px;top:921px;font-size:14px;color:#37352f">Financeiro</div>
<div class="a sf" style="left:1563px;top:951px;font-size:14px;color:#37352f">4900</div>
<div class="a sf" style="left:1563px;top:979px;font-size:14px;color:#37352f">98%</div>
<div class="bar" style="left:1599px;top:983px;width:52px"><i style="width:51.0px;background:#d29a35"></i></div>
</body></html>
